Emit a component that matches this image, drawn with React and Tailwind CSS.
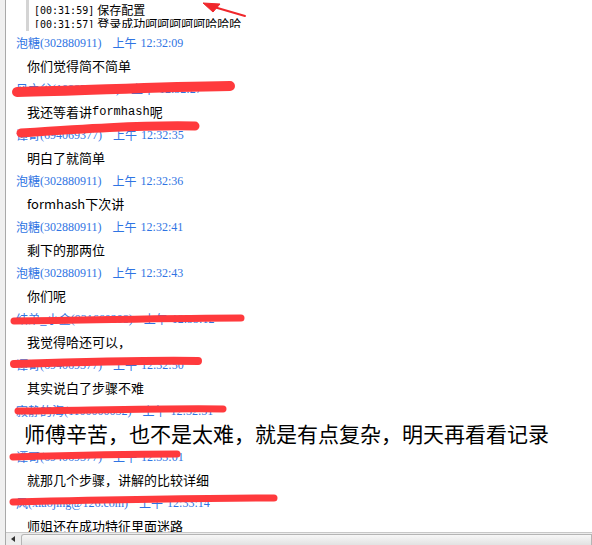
const cjk = { fontFamily: '"Noto Sans CJK SC", "Noto Sans", sans-serif' };
const hdr = { fontFamily: '"Liberation Serif", "Noto Sans CJK SC", serif' };
const mono = { fontFamily: '"DejaVu Sans Mono", "Liberation Mono", monospace' };

const messages = [
  { name: "泡糖", id: "302880911", time: "12:32:09", text: "你们觉得简不简单" },
  { name: "风之谷", id: "1098765432", time: "12:32:27", text: "我还等着讲", code: "formhash", tail: "呢" },
  { name: "谭哥", id: "694069377", time: "12:32:35", text: "明白了就简单" },
  { name: "泡糖", id: "302880911", time: "12:32:36", text: "formhash下次讲" },
  { name: "泡糖", id: "302880911", time: "12:32:41", text: "剩下的那两位" },
  { name: "泡糖", id: "302880911", time: "12:32:43", text: "你们呢" },
  { name: "结弟_小金", id: "931660208", time: "12:33:12", text: "我觉得哈还可以，" },
  { name: "谭哥", id: "694069377", time: "12:32:50", text: "其实说白了步骤不难" },
  { name: "寂静的海", id: "1100000052", time: "12:32:51", text: "师傅辛苦，也不是太难，就是有点复杂，明天再看看记录", big: true },
  { name: "谭哥", id: "694069377", time: "12:33:01", text: "就那几个步骤，讲解的比较详细" },
  { name: "风", id: "xiaojing@126.com", time: "12:33:14", text: "师姐还在成功特征里面迷路" },
];

const Header = ({ m }) => (
  <div className="h-[23px] flex items-center pl-[17px] text-[12px] text-[#2f74e3] whitespace-nowrap" style={hdr}>
    <span style={cjk}>{m.name}</span>
    <span>({m.id})</span>
    <span className="ml-[11px]" style={cjk}>上午</span>
    <span className="ml-[4px]">{m.time}</span>
  </div>
);

const Body = ({ m }) => {
  if (m.big) {
    return (
      <div className="h-[23px] flex items-center pl-[25px] text-[21px] text-black whitespace-nowrap leading-none" style={cjk}>
        {m.text}
      </div>
    );
  }
  return (
    <div className="h-[23px] flex items-center pl-[28px] text-[13px] text-black whitespace-nowrap" style={cjk}>
      {m.text}
      {m.code && (
        <>
          <span className="text-[12px]" style={{ fontFamily: '"Liberation Mono", monospace' }}>{m.code}</span>
          {m.tail}
        </>
      )}
    </div>
  );
};

const Scribbles = () => (
  <svg className="absolute inset-0 pointer-events-none" width="592" height="545">
    <g stroke="#ff3a3d" strokeLinecap="round" fill="none">
      <path d="M17 92 C 80 91, 150 87, 230 86" strokeWidth="10" />
      <path d="M21 133 C 80 129, 140 125, 195 126" strokeWidth="9" />
      <path d="M14 321 C 100 320, 180 318, 241 318" strokeWidth="7" />
      <path d="M14 364 C 80 362, 150 360, 198 361" strokeWidth="8" />
      <path d="M18 411 C 100 410, 180 408, 223 409" strokeWidth="7" />
      <path d="M13 457 C 80 455, 140 454, 177 454" strokeWidth="7" />
      <path d="M13 502 C 100 500, 200 498, 274 498" strokeWidth="7" />
    </g>
    <g fill="#f0272b" stroke="#f0272b">
      <polygon points="203,3 220,4 213,12" strokeWidth="1" />
      <line x1="214" y1="7" x2="245" y2="16" strokeWidth="2" strokeLinecap="round" />
    </g>
  </svg>
);

export default function App() {
  return (
    <div className="relative w-[592px] h-[545px] bg-white overflow-hidden flex">
      <div className="w-[6px] h-full bg-[#f0f0f0] border-r border-[#a9a9a9] shrink-0" />
      <div className="flex-1 flex flex-col min-w-0">
        <div className="flex-1 overflow-hidden">
          <div className="h-[31px] ml-[20px] border-l-[3px] border-[#d4d4d4] pl-[5px]">
            <div className="h-[28px] overflow-hidden">
              <div className="h-[14px] mt-[3px] flex items-center text-[12px] text-black whitespace-nowrap" style={cjk}>
                <span className="text-[10px]" style={mono}>[00:31:59]</span>
                <span className="ml-[3px]">保存配置</span>
              </div>
              <div className="h-[14px] flex items-center text-[12px] text-black whitespace-nowrap" style={cjk}>
                <span className="text-[10px]" style={mono}>[00:31:57]</span>
                <span className="ml-[3px]">登录成功呵呵呵呵呵哈哈哈</span>
              </div>
            </div>
          </div>
          {messages.map((m, i) => (
            <div key={i} className="-ml-[7px]">
              <Header m={m} />
              <Body m={m} />
            </div>
          ))}
        </div>
        <div className="h-[13px] shrink-0 flex border-t border-[#c8c8c8] bg-[#ececec]">
          <div className="w-[14px] flex items-center justify-center">
            <div className="w-0 h-0 border-y-[3px] border-y-transparent border-r-[4px] border-r-[#333]" />
          </div>
          <div className="flex-1 mt-[1px] ml-[1px] rounded-tl-[3px] border border-b-0 border-[#b5b5b5] bg-gradient-to-b from-[#f7f7f7] to-[#e2e2e2]" />
        </div>
      </div>
      <Scribbles />
    </div>
  );
}
